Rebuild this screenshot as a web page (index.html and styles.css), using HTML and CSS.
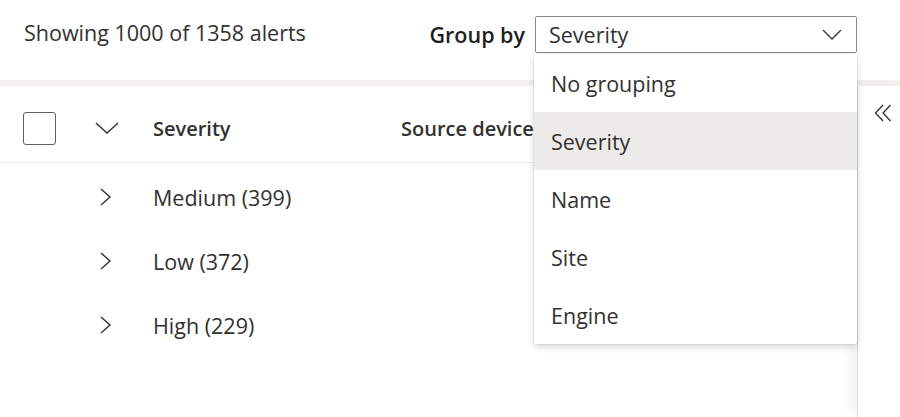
FILE: index.html
```html
<!DOCTYPE html>
<html>
<head>
<meta charset="utf-8">
<link rel="stylesheet" href="styles.css">
</head>
<body>
<div class="page">
  <div class="toolbar">
    <div class="count">Showing 1000 of 1358 alerts</div>
    <div class="group">
      <span class="group-label">Group by</span>
      <div class="select">
        <span class="select-value">Severity</span>
        <svg class="select-chev" width="20" height="11" viewBox="0 0 20 11"><path d="M1 1 L10 10 L19 1" fill="none" stroke="#323130" stroke-width="1.3"/></svg>
        <ul class="menu">
          <li class="menu-item">No grouping</li>
          <li class="menu-item selected">Severity</li>
          <li class="menu-item">Name</li>
          <li class="menu-item">Site</li>
          <li class="menu-item">Engine</li>
        </ul>
      </div>
    </div>
  </div>
  <div class="band"></div>
  <div class="main">
    <div class="table">
      <div class="thead">
        <div class="cell-check"><span class="checkbox"></span></div>
        <div class="cell-chev">
          <svg width="24" height="12" viewBox="0 0 24 12"><path d="M1 1 L12 11 L23 1" fill="none" stroke="#323130" stroke-width="1.4"/></svg>
        </div>
        <div class="th th-sev">Severity</div>
        <div class="th">Source device</div>
      </div>
      <div class="rows">
        <div class="row">
          <div class="cell-check"></div>
          <div class="cell-chev"><svg width="14" height="18" viewBox="0 0 14 18"><path d="M2 1 L11 9 L2 17" fill="none" stroke="#323130" stroke-width="1.4"/></svg></div>
          <div class="td">Medium (399)</div>
        </div>
        <div class="row">
          <div class="cell-check"></div>
          <div class="cell-chev"><svg width="14" height="18" viewBox="0 0 14 18"><path d="M2 1 L11 9 L2 17" fill="none" stroke="#323130" stroke-width="1.4"/></svg></div>
          <div class="td">Low (372)</div>
        </div>
        <div class="row">
          <div class="cell-check"></div>
          <div class="cell-chev"><svg width="14" height="18" viewBox="0 0 14 18"><path d="M2 1 L11 9 L2 17" fill="none" stroke="#323130" stroke-width="1.4"/></svg></div>
          <div class="td">High (229)</div>
        </div>
      </div>
    </div>
    <div class="side">
      <svg class="collapse" width="18" height="18" viewBox="0 0 18 18"><path d="M9 1 L1.5 9 L9 17 M16.5 1 L9 9 L16.5 17" fill="none" stroke="#323130" stroke-width="1.3"/></svg>
    </div>
  </div>
</div>
</body>
</html>
```
FILE: styles.css
```css
* { box-sizing: border-box; }
html, body { margin: 0; padding: 0; }
body {
  width: 900px;
  height: 417px;
  overflow: hidden;
  background: #fff;
  font-family: "Open Sans", "Noto Sans", sans-serif;
  color: #323130;
}
.page { position: relative; width: 900px; height: 417px; }
.toolbar {
  height: 80px;
  display: flex;
  align-items: flex-start;
  padding: 16px 43px 0 24px;
}
.count {
  font-size: 21.5px;
  line-height: 33px;
  height: 37px;
}
.group {
  margin-left: auto;
  display: flex;
  align-items: center;
}
.group-label {
  font-size: 21.5px;
  font-weight: 600;
  color: #201f1e;
  margin-right: 10px;
  line-height: 37px;
}
.select {
  position: relative;
  width: 322px;
  height: 37px;
  border: 1px solid #8a8886;
  border-radius: 2px;
  display: flex;
  align-items: center;
  padding: 0 14px 0 13px;
}
.select-value { font-size: 21.5px; flex: 1; }
.select-chev { display: block; }
.menu {
  position: absolute;
  left: -2px;
  top: 37px;
  width: 323px;
  margin: 0;
  padding: 0;
  list-style: none;
  background: #fff;
  box-shadow: 0 3px 7px rgba(0,0,0,0.16), 0 0 2px rgba(0,0,0,0.12);
  border-radius: 2px;
  z-index: 5;
}
.menu-item {
  height: 58px;
  display: flex;
  align-items: center;
  padding-left: 17px;
  font-size: 21.5px;
}
.menu-item.selected { background: #edebe9; }
.band { height: 6px; background: #f3f2f1; }
.main { display: flex; height: 331px; }
.table { flex: 1; }
.thead {
  height: 77px;
  display: flex;
  align-items: center;
  padding-top: 8px;
  border-bottom: 1px solid #edebe9;
}
.cell-check { width: 83px; padding-left: 23px; display: flex; }
.checkbox {
  width: 33px;
  height: 33px;
  border: 1.5px solid #605e5c;
  border-radius: 3px;
}
.cell-chev { width: 70px; padding-left: 12px; display: flex; align-items: center; }
.cell-chev svg { display: block; }
.th { font-size: 20px; font-weight: 600; }
.th-sev { width: 248px; }
.rows { padding-top: 2px; }
.row {
  height: 64px;
  display: flex;
  align-items: center;
}
.row .cell-chev { padding-left: 16px; }
.td { font-size: 21.5px; }
.side {
  width: 43px;
  border-left: 1px solid #d6d8db;
  box-shadow: -6px 0 12px rgba(0,0,0,0.05);
  display: flex;
  justify-content: center;
  align-items: flex-start;
  padding-top: 18px;
  padding-left: 7px;
}
.collapse { display: block; }
```
